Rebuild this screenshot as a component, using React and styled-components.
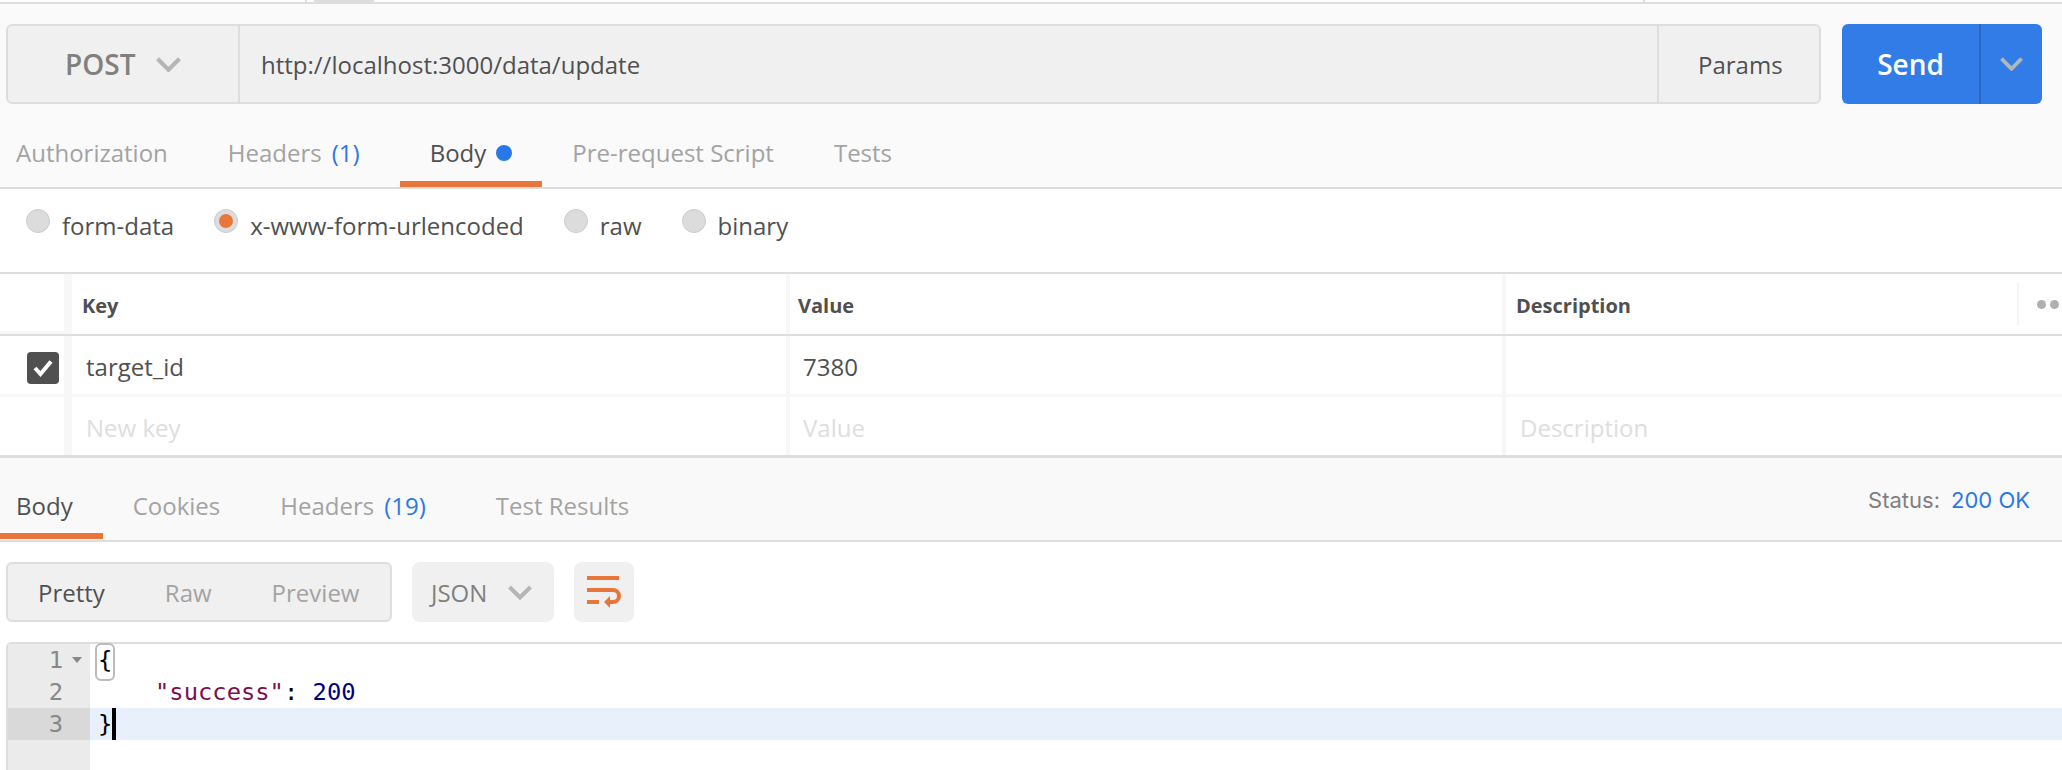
import React from "react";
import styled, { createGlobalStyle } from "styled-components";

const GlobalStyle = createGlobalStyle`
    html, body {
        margin: 0;
        padding: 0;
        background: #fff;
    }
    * {
        box-sizing: border-box;
    }
`;

const Page = styled.div`
    width: 2062px;
    height: 770px;
    overflow: hidden;
    font-family: "Open Sans", "Liberation Sans", sans-serif;
    font-size: 24px;
    color: #505050;
    background: #fff;
`;

const WindowStrip = styled.div`
    height: 4px;
    display: flex;
    border-bottom: 2px solid #ddd;
`;

const StripDivider = styled.div`
    width: 2px;
    height: 2px;
    margin-left: ${(p) => p.$left}px;
    background: #ddd;
`;

const StripTab = styled.div`
    width: 60px;
    height: 2px;
    margin-left: 7px;
    background: #ddd;
`;

const RequestPane = styled.div`
    height: 185px;
    background: #fafafa;
    border-bottom: 2px solid #ddd;
    padding-top: 20px;
`;

const RequestBar = styled.div`
    display: flex;
    height: 80px;
    padding: 0 20px 0 6px;
    gap: 21px;
`;

const UrlGroup = styled.div`
    flex: 1;
    display: flex;
    background: #f0f0f0;
    border: 2px solid #ddd;
    border-radius: 6px;
`;

const MethodSelect = styled.div`
    width: 232px;
    display: flex;
    align-items: center;
    padding-left: 57px;
    gap: 21px;
    border-right: 2px solid #ddd;
    font-size: 28px;
    font-weight: 600;
    color: #808080;
`;

const UrlText = styled.div`
    flex: 1;
    display: flex;
    align-items: center;
    padding-left: 21px;
    color: #505050;
`;

const ParamsButton = styled.div`
    width: 162px;
    display: flex;
    align-items: center;
    padding-left: 39px;
    border-left: 2px solid #ddd;
`;

const SendButton = styled.div`
    width: 200px;
    display: flex;
    background: #317ce6;
    border-radius: 6px;
    color: #fff;
    font-size: 28px;
    font-weight: 600;
`;

const SendLabel = styled.div`
    width: 139px;
    display: flex;
    align-items: center;
    justify-content: center;
    border-right: 2px solid #2a66bd;
`;

const SendArrow = styled.div`
    flex: 1;
    display: flex;
    align-items: center;
    justify-content: center;
`;

const Tabs = styled.div`
    display: flex;
    height: 61px;
    margin-top: ${(p) => p.$top}px;
`;

const Tab = styled.div`
    display: flex;
    align-items: center;
    height: 100%;
    padding: 0 30px ${(p) => p.$lift || 0}px;
    border-bottom: 6px solid ${(p) => (p.$active ? "#e8763a" : "transparent")};
    color: ${(p) => (p.$active ? "#505050" : "#a3a3a3")};
    white-space: nowrap;
    &:first-child {
        padding-left: 16px;
    }
`;

const Count = styled.span`
    margin: 0 10px;
    color: #2a78e8;
`;

const Dot = styled.span`
    width: 16px;
    height: 16px;
    margin-left: 10px;
    border-radius: 50%;
    background: #2a78e8;
`;

const BodyTypes = styled.div`
    height: 83px;
    display: flex;
    gap: 40px;
    padding: 20px 0 0 26px;
`;

const RadioOption = styled.div`
    display: flex;
    gap: 12px;
    height: 32px;
    line-height: 32px;
`;

const Radio = styled.span`
    width: 24px;
    height: 24px;
    display: flex;
    align-items: center;
    justify-content: center;
    border-radius: 50%;
    background: #dcdcdc;
    border: 1px solid #ccc;
    &::after {
        content: "";
        display: ${(p) => (p.$checked ? "block" : "none")};
        width: 14px;
        height: 14px;
        border-radius: 50%;
        background: #e8763a;
    }
`;

const RadioLabel = styled.span`
    margin-top: 1px;
`;

const ParamsTable = styled.div`
    display: grid;
    grid-template-columns: 64px 722px 716px 560px;
    border-top: 2px solid #ddd;
    border-bottom: 3px solid #ddd;
`;

const TableRow = styled.div`
    display: contents;
`;

const Cell = styled.div`
    display: flex;
    align-items: center;
    position: relative;
    height: ${(p) => p.$height}px;
    padding-top: 2px;
    padding-left: ${(p) => p.$pad}px;
    border-left: ${(p) => p.$rule}px solid #f7f7f7;
    font-weight: ${(p) => (p.$head ? 700 : 400)};
    font-size: ${(p) => (p.$head ? "20px" : "24px")};
    color: ${(p) => (p.$ghost ? "#dedede" : "#505050")};
`;

const CheckCell = styled.div`
    display: flex;
    align-items: center;
    justify-content: flex-start;
    padding: 6px 0 0 27px;
    height: ${(p) => p.$height}px;
    border-bottom: ${(p) => p.$under || "0 solid transparent"};
`;

const CheckBox = styled.div`
    width: 32px;
    height: 32px;
    display: flex;
    align-items: center;
    justify-content: center;
    border-radius: 4px;
    background: #505050;
`;

const HeadRule = styled.div`
    height: 2px;
    background: #ddd;
    grid-column: 1 / -1;
`;

const RowRule = styled.div`
    height: 3px;
    background: #f7f7f7;
    grid-column: 1 / -1;
`;

const MoreDots = styled.div`
    position: absolute;
    top: 9px;
    right: 0;
    height: 42px;
    width: 45px;
    display: flex;
    align-items: center;
    gap: 4px;
    padding-left: 18px;
    border-left: 2px solid #f5f5f5;
    &::before,
    &::after {
        content: "";
        flex: none;
        width: 9px;
        height: 9px;
        border-radius: 50%;
        background: #b0b0b0;
    }
`;

const ResponseHead = styled.div`
    height: 84px;
    display: flex;
    justify-content: space-between;
    background: #f9f9f9;
    border-bottom: 2px solid #ddd;
`;

const Status = styled.div`
    display: flex;
    gap: 11px;
    height: 28px;
    margin: 28px 32px 0 0;
    font-family: Inter, "Open Sans", sans-serif;
    font-size: 22px;
    line-height: 28px;
    color: #808080;
`;

const StatusValue = styled.span`
    color: #2a78e8;
`;

const Toolbar = styled.div`
    display: flex;
    height: 100px;
    gap: 20px;
    padding: 20px 0 20px 6px;
`;

const Segmented = styled.div`
    width: 386px;
    display: flex;
    align-items: center;
    background: #f0f0f0;
    border: 2px solid #ddd;
    border-radius: 6px;
`;

const Segment = styled.div`
    padding-left: ${(p) => p.$pad}px;
    color: ${(p) => (p.$active ? "#505050" : "#a3a3a3")};
`;

const FormatSelect = styled.div`
    width: 142px;
    display: flex;
    align-items: center;
    gap: 21px;
    padding-left: 19px;
    background: #f0f0f0;
    border-radius: 8px;
    color: #808080;
`;

const WrapButton = styled.div`
    width: 60px;
    display: flex;
    align-items: center;
    justify-content: center;
    background: #f0f0f0;
    border-radius: 8px;
`;

const Editor = styled.div`
    display: flex;
    height: 128px;
    margin-left: 6px;
    border-top: 2px solid #ddd;
    border-left: 2px solid #ddd;
    border-top-left-radius: 6px;
    font-family: "DejaVu Sans Mono", "Liberation Mono", monospace;
    font-size: 23.8px;
`;

const Gutter = styled.div`
    width: 82px;
    background: #ebebeb;
`;

const LineNumber = styled.div`
    position: relative;
    height: 32px;
    padding-right: 27px;
    text-align: right;
    line-height: 32px;
    color: #888;
    background: ${(p) => (p.$active ? "#d9d9d9" : "transparent")};
`;

const FoldMark = styled.span`
    position: absolute;
    top: 13px;
    right: 8px;
    border-left: 5px solid transparent;
    border-right: 5px solid transparent;
    border-top: 6px solid #888;
`;

const Code = styled.div`
    flex: 1;
`;

const CodeLine = styled.div`
    display: flex;
    height: 32px;
    padding-left: ${(p) => p.$indent}px;
    line-height: 32px;
    white-space: pre;
    color: #000;
    background: ${(p) => (p.$active ? "#e8f0fc" : "transparent")};
`;

const MatchedBrace = styled.span`
    position: relative;
    &::before {
        content: "";
        position: absolute;
        top: -1px;
        left: -3px;
        right: -3px;
        height: 34px;
        border: 2px solid #bbb;
        border-radius: 6px;
    }
`;

const JsonKey = styled.span`
    color: #7a1050;
`;

const JsonNumber = styled.span`
    color: #000080;
`;

const Cursor = styled.span`
    width: 4px;
    height: 32px;
    background: #000;
`;

function Chevron({ width, height, stroke }) {
    return (
        <svg width={width} height={height} viewBox="0 0 24 14" fill="none">
            <polyline points="1.5,1.5 12,12 22.5,1.5" stroke={stroke} strokeWidth="4" />
        </svg>
    );
}

function WrapIcon() {
    return (
        <svg width="36" height="32" viewBox="0 0 36 32" fill="none">
            <rect x="1" y="0" width="32" height="4" fill="#e8763a" />
            <path d="M1 14 H27 a6 6 0 0 1 0 12 H22" stroke="#e8763a" strokeWidth="4" />
            <rect x="1" y="24" width="12" height="4" fill="#e8763a" />
            <polygon points="18,26 24,20 24,32" fill="#e8763a" />
        </svg>
    );
}

function App() {
    return (
        <Page>
            <GlobalStyle />
            <WindowStrip>
                <StripDivider $left={305} />
                <StripTab />
                <StripDivider $left={1269} />
            </WindowStrip>

            <RequestPane>
                <RequestBar>
                    <UrlGroup>
                        <MethodSelect>
                            POST
                            <Chevron width={25} height={15} stroke="#b5b5b5" />
                        </MethodSelect>
                        <UrlText>http://localhost:3000/data/update</UrlText>
                        <ParamsButton>Params</ParamsButton>
                    </UrlGroup>
                    <SendButton>
                        <SendLabel>Send</SendLabel>
                        <SendArrow>
                            <Chevron width={23} height={14} stroke="#b5b5b5" />
                        </SendArrow>
                    </SendButton>
                </RequestBar>
                <Tabs $top={22}>
                    <Tab $lift={2}>Authorization</Tab>
                    <Tab $lift={2}>Headers<Count>(1)</Count></Tab>
                    <Tab $lift={2} $active>Body<Dot /></Tab>
                    <Tab $lift={2}>Pre-request Script</Tab>
                    <Tab $lift={2}>Tests</Tab>
                </Tabs>
            </RequestPane>

            <BodyTypes>
                <RadioOption><Radio /><RadioLabel>form-data</RadioLabel></RadioOption>
                <RadioOption><Radio $checked /><RadioLabel>x-www-form-urlencoded</RadioLabel></RadioOption>
                <RadioOption><Radio /><RadioLabel>raw</RadioLabel></RadioOption>
                <RadioOption><Radio /><RadioLabel>binary</RadioLabel></RadioOption>
            </BodyTypes>

            <ParamsTable>
                <TableRow>
                    <CheckCell $height={60} $under="3px solid #f7f7f7" />
                    <Cell $height={60} $pad={10} $rule={8} $head>Key</Cell>
                    <Cell $height={60} $pad={8} $rule={4} $head>Value</Cell>
                    <Cell $height={60} $pad={10} $rule={4} $head>
                        Description
                        <MoreDots />
                    </Cell>
                </TableRow>
                <HeadRule />
                <TableRow>
                    <CheckCell $height={58}>
                        <CheckBox>
                            <svg width="20" height="18" viewBox="0 0 20 18" fill="none">
                                <polyline points="2,9 7.5,15 18,2.5" stroke="#fff" strokeWidth="4" />
                            </svg>
                        </CheckBox>
                    </CheckCell>
                    <Cell $height={58} $pad={14} $rule={8}>target_id</Cell>
                    <Cell $height={58} $pad={13} $rule={4}>7380</Cell>
                    <Cell $height={58} $pad={14} $rule={4} />
                </TableRow>
                <RowRule />
                <TableRow>
                    <CheckCell $height={58} />
                    <Cell $height={58} $pad={14} $rule={8} $ghost>New key</Cell>
                    <Cell $height={58} $pad={13} $rule={4} $ghost>Value</Cell>
                    <Cell $height={58} $pad={14} $rule={4} $ghost>Description</Cell>
                </TableRow>
            </ParamsTable>

            <ResponseHead>
                <Tabs $top={20}>
                    <Tab $active>Body</Tab>
                    <Tab>Cookies</Tab>
                    <Tab>Headers<Count>(19)</Count></Tab>
                    <Tab>Test Results</Tab>
                </Tabs>
                <Status>
                    Status:
                    <StatusValue>200 OK</StatusValue>
                </Status>
            </ResponseHead>

            <Toolbar>
                <Segmented>
                    <Segment $active $pad={30}>Pretty</Segment>
                    <Segment $pad={60}>Raw</Segment>
                    <Segment $pad={60}>Preview</Segment>
                </Segmented>
                <FormatSelect>
                    JSON
                    <Chevron width={24} height={15} stroke="#b5b5b5" />
                </FormatSelect>
                <WrapButton>
                    <WrapIcon />
                </WrapButton>
            </Toolbar>

            <Editor>
                <Gutter>
                    <LineNumber>1<FoldMark /></LineNumber>
                    <LineNumber>2</LineNumber>
                    <LineNumber $active>3</LineNumber>
                </Gutter>
                <Code>
                    <CodeLine $indent={8}><MatchedBrace>{"{"}</MatchedBrace></CodeLine>
                    <CodeLine $indent={65}>
                        <JsonKey>"success"</JsonKey>{": "}<JsonNumber>200</JsonNumber>
                    </CodeLine>
                    <CodeLine $indent={8} $active>{"}"}<Cursor /></CodeLine>
                </Code>
            </Editor>
        </Page>
    );
}

export default App;
